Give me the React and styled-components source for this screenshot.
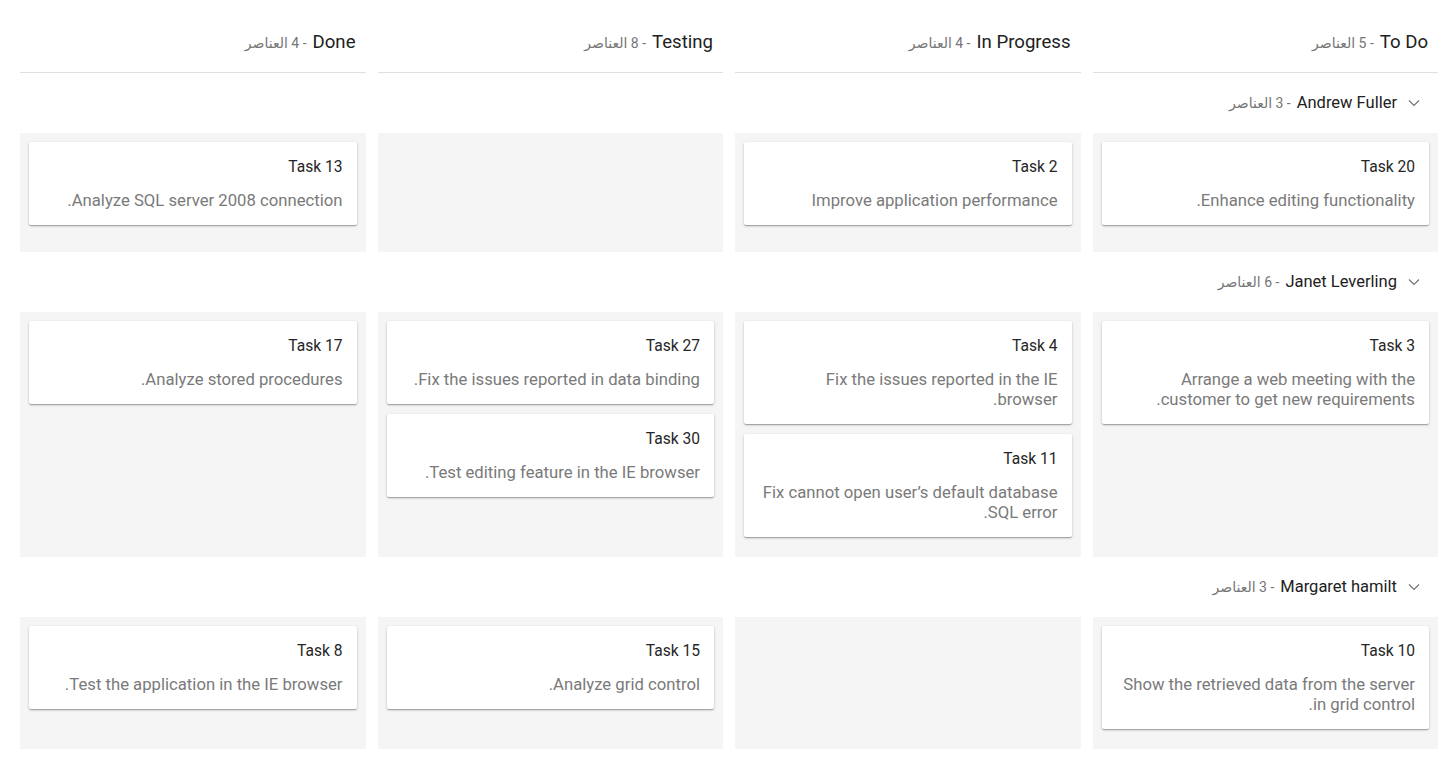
import React from "react";
import styled, { createGlobalStyle } from "styled-components";

const Global = createGlobalStyle`
  html, body { margin: 0; padding: 0; background: #fff; }
  body { font-family: Roboto, "DejaVu Sans", sans-serif; }
`;

const Board = styled.div`
  direction: rtl;
  padding: 20px 12px 0 20px;
  font-family: Roboto, "DejaVu Sans", sans-serif;
`;

const Grid = styled.div`
  display: grid;
  grid-template-columns: repeat(4, 1fr);
  column-gap: 12px;
`;

const ColumnHeader = styled.div`
  display: flex;
  align-items: baseline;
  padding: 10px 10px 17px;
  border-bottom: 1px solid #e0e0e0;
  line-height: 24px;
`;

const HeaderText = styled.span`
  font-size: 18.6px;
  color: #212121;
`;

const Count = styled.span`
  font-size: 14px;
  color: #757575;
  margin-inline-start: 6px;
`;

const LaneHeader = styled.div`
  display: flex;
  align-items: center;
  height: 60px;
  padding-inline-start: 18px;
  gap: 11px;
`;

const LaneName = styled.span`
  font-size: 16.5px;
  color: #212121;
  line-height: 20px;
`;

const LaneTitle = styled.div`
  display: flex;
  align-items: baseline;
`;

const Cell = styled.div`
  background: #f5f5f5;
  padding: 9px 9px 20px;
  min-height: ${(p) => (p.$tall ? "90px" : "0")};
  display: flex;
  flex-direction: column;
  gap: 10px;
`;

const Card = styled.div`
  background: #fff;
  border-radius: 2px;
  box-shadow: 0 1px 3px 0 rgba(0, 0, 0, 0.2), 0 1px 1px 0 rgba(0, 0, 0, 0.14),
    0 2px 1px -1px rgba(0, 0, 0, 0.12);
`;

const CardTitle = styled.div`
  padding: 13px 14px 0;
  font-size: 15.6px;
  line-height: 24px;
  color: #262626;
`;

const CardText = styled.div`
  padding: 12px 14px 14px;
  font-size: 16.7px;
  line-height: 20px;
  color: #7a7a7a;
`;

const Chevron = () => (
  <svg width="12" height="8" viewBox="0 0 12 8" aria-hidden="true">
    <path d="M1 1.5 L6 6.5 L11 1.5" fill="none" stroke="#757575" strokeWidth="1.2" />
  </svg>
);

const columns = [
  { name: "To Do", count: 5 },
  { name: "In Progress", count: 4 },
  { name: "Testing", count: 8 },
  { name: "Done", count: 4 },
];

const lanes = [
  {
    name: "Andrew Fuller",
    count: 3,
    tall: true,
    cells: [
      [{ id: 20, text: "Enhance editing functionality." }],
      [{ id: 2, text: "Improve application performance" }],
      [],
      [{ id: 13, text: "Analyze SQL server 2008 connection." }],
    ],
  },
  {
    name: "Janet Leverling",
    count: 6,
    cells: [
      [{ id: 3, text: "Arrange a web meeting with the customer to get new requirements." }],
      [
        { id: 4, text: "Fix the issues reported in the IE browser." },
        { id: 11, text: "Fix cannot open user’s default database SQL error." },
      ],
      [
        { id: 27, text: "Fix the issues reported in data binding." },
        { id: 30, text: "Test editing feature in the IE browser." },
      ],
      [{ id: 17, text: "Analyze stored procedures." }],
    ],
  },
  {
    name: "Margaret hamilt",
    count: 3,
    cells: [
      [{ id: 10, text: "Show the retrieved data from the server in grid control." }],
      [],
      [{ id: 15, text: "Analyze grid control." }],
      [{ id: 8, text: "Test the application in the IE browser." }],
    ],
  },
];

export default function App() {
  return (
    <>
      <Global />
      <Board dir="rtl">
        <Grid>
          {columns.map((c) => (
            <ColumnHeader key={c.name}>
              <HeaderText>{c.name}</HeaderText>
              <Count>- {c.count} العناصر</Count>
            </ColumnHeader>
          ))}
        </Grid>
        {lanes.map((lane) => (
          <React.Fragment key={lane.name}>
            <LaneHeader>
              <Chevron />
              <LaneTitle>
                <LaneName>{lane.name}</LaneName>
                <Count>- {lane.count} العناصر</Count>
              </LaneTitle>
            </LaneHeader>
            <Grid>
              {lane.cells.map((cards, i) => (
                <Cell key={i} $tall={lane.tall}>
                  {cards.map((card) => (
                    <Card key={card.id}>
                      <CardTitle>Task {card.id}</CardTitle>
                      <CardText>{card.text}</CardText>
                    </Card>
                  ))}
                </Cell>
              ))}
            </Grid>
          </React.Fragment>
        ))}
      </Board>
    </>
  );
}
